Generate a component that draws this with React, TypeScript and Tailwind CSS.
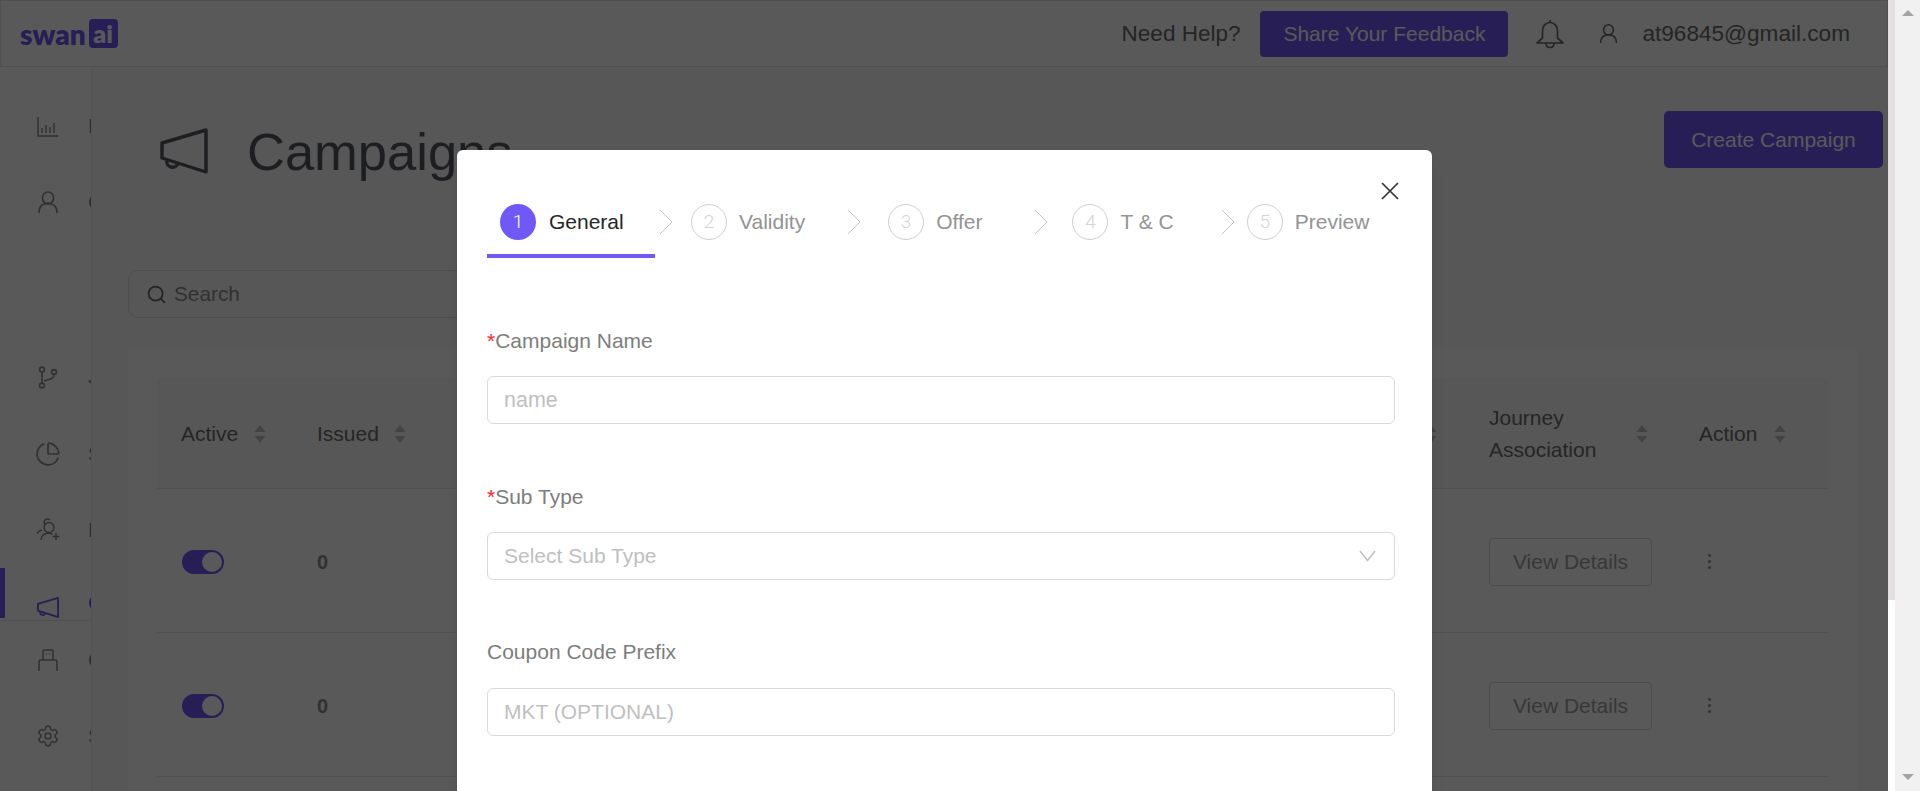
import { ChartPie, Search, Settings } from 'lucide-react';
import type { ReactNode } from 'react';

const font = { fontFamily: '"Liberation Sans", Arial, sans-serif' };
const logoFont = { fontFamily: 'Lato, sans-serif' };

function SortIcon() {
  return (
    <svg width="12" height="20" viewBox="0 0 12 20" className="shrink-0 text-[#bfbfbf]" fill="currentColor">
      <path d="M6 1l5.500 7H.5z" />
      <path d="M6 19L.5 12h11z" />
    </svg>
  );
}

function ChartIcon() {
  return (
    <svg width="22" height="20" viewBox="0 0 22 20" className="mt-[2px]" fill="none" stroke="currentColor" strokeWidth="1.4">
      <path d="M1 0v19h20" />
      <path d="M5 16v-5M9 16V8M13 16v-6M17 16V6" />
    </svg>
  );
}

function UserIcon({ w = 22, h = 24, sw = 1.8 }: { w?: number; h?: number; sw?: number }) {
  return (
    <svg width={w} height={h} viewBox="0 0 22 24" fill="none" stroke="currentColor" strokeWidth={sw}>
      <ellipse cx="11" cy="7.500" rx="6.200" ry="6.500" />
      <path d="M1 24c0-7 4-10.500 10-10.500S21 17 21 24" />
    </svg>
  );
}

function BranchIcon() {
  return (
    <svg width="20" height="23" viewBox="0 0 20 23" fill="none" stroke="currentColor" strokeWidth="1.6">
      <circle cx="4" cy="3.500" r="2.400" />
      <circle cx="16" cy="6" r="2.400" />
      <circle cx="4" cy="19.500" r="2.400" />
      <path d="M4 6v11" />
      <path d="M16 8.500c0 3-1 4-4 4.800L6 15" />
    </svg>
  );
}

function PeopleIcon() {
  return (
    <svg width="24" height="24" viewBox="0 0 24 24" fill="none" stroke="currentColor" strokeWidth="1.5">
      <circle cx="13" cy="9.500" r="5" />
      <path d="M5 22c.5-4 3-6.500 7-7 2 0 3.500.5 4.500 1.500" />
      <path d="M9 7.500C8.500 5 7.500 4 8.500 2.500 10 .5 12.500.5 14 2" />
      <path d="M1 15.500c1-2 3-3 5-3.500" />
      <path d="M20 15v7M16.500 18.500h7" />
    </svg>
  );
}

function ChairIcon() {
  return (
    <svg width="20" height="22" viewBox="0 0 20 22" fill="none" stroke="currentColor" strokeWidth="1.5">
      <path d="M5 11V2a1 1 0 0 1 1-1h8a1 1 0 0 1 1 1v9" />
      <path d="M1 22v-9a2 2 0 0 1 2-2h14a2 2 0 0 1 2 2v9" />
      <path d="M8 5h.8M11.500 5h.8" />
    </svg>
  );
}

function MegaphoneIcon({ w, h, sw }: { w: number; h: number; sw: number }) {
  return (
    <svg width={w} height={h} viewBox="0 0 48 46" fill="none" stroke="currentColor" strokeWidth={sw} strokeLinejoin="round">
      <path d="M46 2v42L2 30V15z" />
      <path d="M7 32a5.500 5.500 0 0 0 11 3" />
    </svg>
  );
}

function BellIcon() {
  return (
    <svg width="28" height="30" viewBox="0 0 28 30" fill="none" stroke="currentColor" strokeWidth="1.7" strokeLinejoin="round">
      <path d="M14 1v2.500" />
      <path d="M14 3.500c-4.500 0-7.500 3.500-7.500 8.500v7L1 24h26l-5.500-5v-7c0-5-3-8.500-7.500-8.500z" />
      <path d="M10 24c0 6 8 6 8 0" />
    </svg>
  );
}

function Toggle() {
  return (
    <div className="flex h-6 w-[42px] items-center justify-end rounded-full bg-[#7058f7] pr-[2px]">
      <div className="size-5 rounded-full bg-white" />
    </div>
  );
}

function NavItem({ icon, label, heightClass, mbClass }: { icon: ReactNode; label: string; heightClass: string; mbClass?: string }) {
  return (
    <div className={`flex w-full items-center overflow-hidden whitespace-nowrap text-[21px] text-[#8a8a8a] ${heightClass} ${mbClass ?? ''}`}>
      <div className="-mr-[8px] flex w-[96px] shrink-0 justify-center">{icon}</div>
      {label}
    </div>
  );
}

function ActiveNavItem({ icon, label }: { icon: ReactNode; label: string }) {
  return (
    <div className="flex h-[53px] w-full items-end overflow-hidden border-b border-[#e6e6e6] pb-[2px] whitespace-nowrap text-[21px] text-[#7058f7]">
      <div className="h-full w-[5px] shrink-0 bg-[#7058f7]" />
      <div className="-mr-[3px] flex w-[86px] shrink-0 justify-center">{icon}</div>
      {label}
    </div>
  );
}

function HeaderCell({ children, pad = 'pl-[24px]', gap = 'gap-[16px]' }: { children: ReactNode; pad?: string; gap?: string }) {
  return <div className={`flex items-center ${gap} ${pad} text-[21px] leading-8 text-[#6c6c6c]`}>{children}</div>;
}

function TableRow() {
  return (
    <div className="grid h-[144px] grid-cols-[135px_1fr_210px_155px] items-center border-b border-[#e8e8e8] pt-[2px]">
      <div className="pl-[25px]">
        <Toggle />
      </div>
      <div className="pl-[25px] text-[20px] font-bold text-[#8c8c8c]">0</div>
      <div className="pl-[26px]">
        <button className="h-12 w-[163px] rounded-[4px] border border-[#d9d9d9] text-[21px] text-[#a0a0a0]">View Details</button>
      </div>
      <div className="flex flex-col gap-[3px] pl-[35px]">
        <span className="size-[3px] rounded-full bg-[#8a8a8a]" />
        <span className="size-[3px] rounded-full bg-[#8a8a8a]" />
        <span className="size-[3px] rounded-full bg-[#8a8a8a]" />
      </div>
    </div>
  );
}

function Label({ children, required }: { children: string; required?: boolean }) {
  return (
    <label className="block text-[21px] leading-8 text-[#7d7d7d]">
      {required && <span className="text-[#f5222d]">*</span>}
      {children}
    </label>
  );
}

function Step({ n, label, active }: { n: number; label: string; active?: boolean }) {
  return (
    <div className={`flex items-center ${active ? 'gap-[13px]' : 'gap-[12px]'}`}>
      <div
        className={`flex size-9 items-center justify-center rounded-full font-[Roboto] text-[19px] font-light ${
          active ? 'bg-[#7058f7] text-white' : 'border border-[#cfcfcf] text-[#d4d4d4]'
        }`}
      >
        {n}
      </div>
      <span className={`text-[21px] ${active ? 'text-[#262626]' : 'text-[#939393]'}`}>{label}</span>
    </div>
  );
}

function StepChevron() {
  return (
    <svg width="14" height="26" viewBox="0 0 14 26" fill="none" stroke="#c4c4c4" strokeWidth="1">
      <path d="M1 1l12 12L1 25" />
    </svg>
  );
}

export default function App() {
  return (
    <div className="flex h-[791px] w-full overflow-hidden bg-white" style={font}>
      <div className="relative h-full w-[1888px] shrink-0 overflow-hidden">
        {/* page under the overlay */}
        <div className="flex h-[67px] items-center border border-[#e6e6e6] pr-[37px] pl-[19px]">
          <div className="flex items-center gap-[3px] text-[#7058f7]" style={logoFont}>
            <span className="text-[28px] leading-none font-extrabold">swan</span>
            <span className="flex h-[29px] w-[29px] items-center justify-center rounded-[4px] bg-[#7058f7] text-[25px] leading-none font-extrabold text-white">
              ai
            </span>
          </div>
          <div className="ml-auto flex items-center text-[#6a6a6a]">
            <span className="text-[22.500px]">Need Help?</span>
            <button className="ml-[20px] h-[46px] w-[248px] rounded-[4px] bg-[#7058f7] text-[21px] text-white">Share Your Feedback</button>
            <span className="ml-[28px]">
              <BellIcon />
            </span>
            <span className="ml-[35px]">
              <UserIcon w={19} h={19} sw={2} />
            </span>
            <span className="ml-[24px] text-[22.600px]">at96845@gmail.com</span>
          </div>
        </div>

        <div className="flex h-[724px]">
          <aside className="flex w-[92px] shrink-0 flex-col border-r border-[#ececec] pt-[21px]">
            <NavItem icon={<ChartIcon />} label="Dashboard" heightClass="h-[76px]" />
            <NavItem icon={<UserIcon w={20} h={22} />} label="Customers" heightClass="h-[76px]" mbClass="mb-[99px]" />
            <NavItem icon={<BranchIcon />} label="Journeys" heightClass="h-[76px]" />
            <NavItem icon={<ChartPie size={26} strokeWidth={1.6} />} label="Segments" heightClass="h-[77px]" />
            <NavItem icon={<PeopleIcon />} label="Personas" heightClass="h-[76px]" />
            <ActiveNavItem icon={<MegaphoneIcon w={22} h={21} sw={4} />} label="Campaigns" />
            <NavItem icon={<ChairIcon />} label="Coupons" heightClass="h-[77px]" />
            <NavItem icon={<Settings size={24} strokeWidth={1.5} />} label="Settings" heightClass="h-[76px]" />
          </aside>

          <main className="min-w-0 flex-1 bg-[#fafafc]">
            <div className="flex items-start pr-[5px] pl-[68px]">
              <div className="mt-[61px] text-[#55585e]">
                <MegaphoneIcon w={48} h={46} sw={3.400} />
              </div>
              <h1 className="mt-[50px] ml-[39px] text-[52.500px] leading-[70px] text-[#55585e]">Campaigns</h1>
              <button className="mt-[44px] ml-auto h-[57px] w-[219px] rounded-[5px] bg-[#7058f7] text-[21px] text-white">Create Campaign</button>
            </div>

            <div className="mt-[83px] ml-[36px] flex h-12 w-[700px] items-center gap-[7px] rounded-[10px] border border-[#dcdcdc] pl-[17px] text-[20.800px] text-[#8c8c8c]">
              <Search size={21} strokeWidth={2} className="text-[#666666]" />
              Search
            </div>

            <div className="mt-[30px] ml-[36px] h-[600px] w-[1729px] bg-white px-[29px] pt-[30px]">
              <div className="grid h-[111px] grid-cols-[135px_1fr_210px_155px] items-center rounded-t-[4px] border-b border-[#e8e8e8] bg-[#fafafa] pt-[2px]">
                <HeaderCell>
                  Active
                  <SortIcon />
                </HeaderCell>
                <div className="flex items-center justify-between pr-[26px]">
                  <HeaderCell pad="pl-[25px]" gap="gap-[15px]">
                    Issued
                    <SortIcon />
                  </HeaderCell>
                  <SortIcon />
                </div>
                <HeaderCell pad="pl-[26px]" gap="gap-[41px]">
                  <span className="w-[106px]">Journey Association</span>
                  <SortIcon />
                </HeaderCell>
                <HeaderCell pad="pl-[26px]" gap="gap-[17px]">
                  Action
                  <SortIcon />
                </HeaderCell>
              </div>
              <TableRow />
              <TableRow />
              <TableRow />
            </div>
          </main>
        </div>

        {/* overlay and modal */}
        <div className="absolute inset-0 bg-[rgba(0,0,0,0.65)]" />
        <div className="absolute top-[150px] left-[457px] h-[700px] w-[975px] rounded-[6px] bg-white pr-[37px] pl-[30px] shadow-lg">
          <button className="absolute top-[32px] right-[33px] text-[#333]">
            <svg width="18" height="18" viewBox="0 0 18 18" fill="none" stroke="currentColor" strokeWidth="1.7">
              <path d="M1 1l16 16M17 1L1 17" />
            </svg>
          </button>
          <div className="flex h-[108px] items-start pt-[54px]">
            <div className="relative h-[54px] w-[168px] shrink-0 pl-[13px]">
              <div className="flex h-9 items-center">
                <Step n={1} label="General" active />
              </div>
              <div className="absolute right-0 bottom-0 left-0 h-1 bg-[#7058f7]" />
            </div>
            <div className="ml-[4px] flex h-9 items-center">
              <StepChevron />
              <div className="ml-[18px]"><Step n={2} label="Validity" /></div>
              <div className="ml-[42px]"><StepChevron /></div>
              <div className="ml-[27px]"><Step n={3} label="Offer" /></div>
              <div className="ml-[52px]"><StepChevron /></div>
              <div className="ml-[24px]"><Step n={4} label="T & C" /></div>
              <div className="ml-[47px]"><StepChevron /></div>
              <div className="ml-[12px]"><Step n={5} label="Preview" /></div>
            </div>
          </div>

          <div className="mt-[67px] flex flex-col gap-[56.500px]">
            <div>
              <Label required>Campaign Name</Label>
              <input
                placeholder="name"
                className="mt-[19px] block h-[48px] w-full rounded-[6px] border border-[#d9d9d9] px-[16px] text-[21.500px] placeholder:text-[#bfbfbf]"
              />
            </div>
            <div>
              <Label required>Sub Type</Label>
              <div className="mt-[19px] flex h-[48px] w-full items-center justify-between rounded-[6px] border border-[#d9d9d9] pr-[18px] pl-[16px] text-[21px] text-[#bfbfbf]">
                Select Sub Type
                <svg width="17" height="12" viewBox="0 0 17 12" fill="none" stroke="currentColor" strokeWidth="1.500">
                  <path d="M1 1l7.500 9.500L16 1" />
                </svg>
              </div>
            </div>
            <div>
              <Label>Coupon Code Prefix</Label>
              <input
                placeholder="MKT (OPTIONAL)"
                className="mt-[20px] block h-[48px] w-full rounded-[6px] border border-[#d9d9d9] px-[16px] text-[21px] placeholder:text-[#bfbfbf]"
              />
            </div>
          </div>
        </div>
      </div>

      {/* inner scroll strip and window scrollbar */}
      <div className="h-full w-[7px] shrink-0 bg-white">
        <div className="h-[600px] bg-[#e4e0df]" />
      </div>
      <div className="flex h-full w-[25px] shrink-0 flex-col items-center justify-between bg-[#f1f1f1] pt-[10px] pb-[11px]">
        <div className="h-0 w-0 border-x-[6px] border-b-[6px] border-x-transparent border-b-[#a3a3a3]" />
        <div className="h-0 w-0 border-x-[6px] border-t-[6px] border-x-transparent border-t-[#a3a3a3]" />
      </div>
    </div>
  );
}
